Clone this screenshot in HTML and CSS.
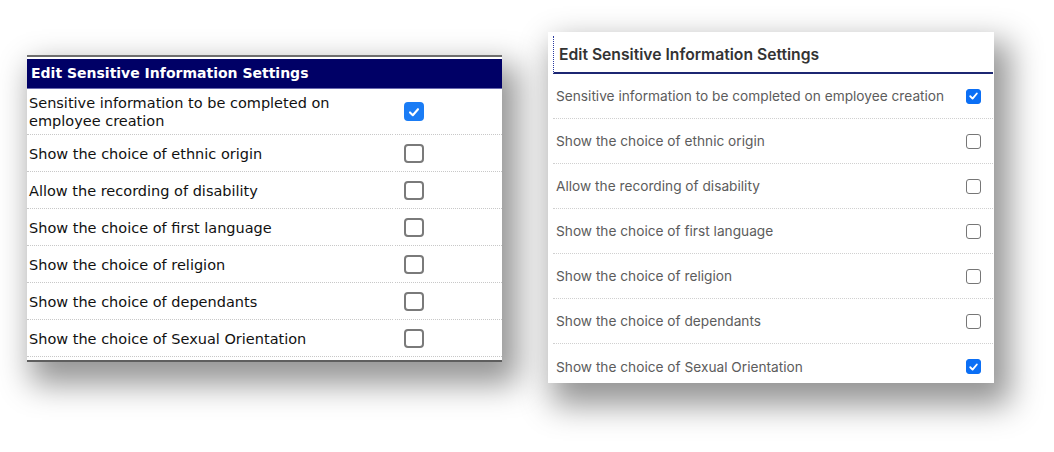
FILE: index.html
```html
<!DOCTYPE html>
<html>
<head>
<meta charset="utf-8">
<link rel="stylesheet" href="styles.css">
</head>
<body>
<div class="stage">
  <section class="old">
    <div class="old-head">Edit Sensitive Information Settings</div>
    <div class="old-grid">
      <div class="old-label tall">Sensitive information to be completed on employee creation</div>
      <div class="old-cell"><span class="cb-old on"><svg viewBox="0 0 20 20" width="20" height="20"><path d="M5 10.5 L8.5 14 L15 6.5" fill="none" stroke="#fff" stroke-width="2.6" stroke-linecap="round" stroke-linejoin="round"/></svg></span></div>
      <div class="old-label">Show the choice of ethnic origin</div>
      <div class="old-cell"><span class="cb-old"></span></div>
      <div class="old-label">Allow the recording of disability</div>
      <div class="old-cell"><span class="cb-old"></span></div>
      <div class="old-label">Show the choice of first language</div>
      <div class="old-cell"><span class="cb-old"></span></div>
      <div class="old-label">Show the choice of religion</div>
      <div class="old-cell"><span class="cb-old"></span></div>
      <div class="old-label">Show the choice of dependants</div>
      <div class="old-cell"><span class="cb-old"></span></div>
      <div class="old-label">Show the choice of Sexual Orientation</div>
      <div class="old-cell"><span class="cb-old"></span></div>
    </div>
  </section>

  <section class="new">
    <div class="new-head">Edit Sensitive Information Settings</div>
    <div class="new-row"><span>Sensitive information to be completed on employee creation</span><span class="cb-new on"><svg viewBox="0 0 14 14" width="14" height="14"><path d="M3.5 7.3 L6 9.8 L10.6 4.3" fill="none" stroke="#fff" stroke-width="2" stroke-linecap="round" stroke-linejoin="round"/></svg></span></div>
    <div class="new-row"><span>Show the choice of ethnic origin</span><span class="cb-new"></span></div>
    <div class="new-row"><span>Allow the recording of disability</span><span class="cb-new"></span></div>
    <div class="new-row"><span>Show the choice of first language</span><span class="cb-new"></span></div>
    <div class="new-row"><span>Show the choice of religion</span><span class="cb-new"></span></div>
    <div class="new-row"><span>Show the choice of dependants</span><span class="cb-new"></span></div>
    <div class="new-row last"><span>Show the choice of Sexual Orientation</span><span class="cb-new on"><svg viewBox="0 0 14 14" width="14" height="14"><path d="M3.5 7.3 L6 9.8 L10.6 4.3" fill="none" stroke="#fff" stroke-width="2" stroke-linecap="round" stroke-linejoin="round"/></svg></span></div>
  </section>
</div>
</body>
</html>
```

FILE: styles.css
```css
html, body {
  margin: 0;
  padding: 0;
  background: #ffffff;
}

.stage {
  display: flex;
  align-items: flex-start;
  padding-left: 27px;
  gap: 46px;
  width: 1054px;
  height: 452px;
  box-sizing: border-box;
  overflow: hidden;
}

/* ---------- old style panel ---------- */
.old {
  margin-top: 55px;
  width: 475px;
  background: #fff;
  border-top: 2px solid #6e6e6e;
  border-bottom: 2px solid #5e5e5e;
  padding: 2px 0 3px;
  box-shadow: 10px 16px 30px 6px rgba(0, 0, 0, 0.42);
  font-family: "DejaVu Sans", sans-serif;
  color: #111;
}

.old-head {
  background: #000066;
  color: #fff;
  font-weight: bold;
  font-size: 14px;
  height: 30px;
  line-height: 29px;
  padding-left: 4px;
  border-bottom: 1px solid #6a6ab0;
  box-sizing: border-box;
}

.old-grid {
  display: grid;
  grid-template-columns: 366px 107px;
  column-gap: 2px;
}

.old-label,
.old-cell {
  height: 37px;
  box-sizing: border-box;
  border-bottom: 1px dotted #c8c8c8;
  display: flex;
  align-items: center;
}

.old-label {
  padding-left: 2px;
  font-size: 14.5px;
  line-height: 18px;
  padding-top: 1px;
}

.old-label.tall,
.old-label.tall + .old-cell {
  height: 46px;
}

.old-cell {
  padding-left: 9px;
}

.cb-old {
  width: 20px;
  height: 19px;
  box-sizing: border-box;
  border: 2px solid #7a7a7a;
  border-radius: 4px;
  display: flex;
  align-items: center;
  justify-content: center;
}

.cb-old.on {
  background: #1a7cf5;
  border-color: #1a7cf5;
}

.cb-old svg {
  width: 18px;
  height: 18px;
}

/* ---------- new style panel ---------- */
.new {
  margin-top: 32px;
  width: 446px;
  height: 351px;
  overflow: hidden;
  background: #fff;
  padding: 4px 1px 0 5px;
  box-sizing: border-box;
  box-shadow: 10px 16px 30px 6px rgba(0, 0, 0, 0.42);
  font-family: Inter, "Noto Sans", sans-serif;
}

.new-head {
  height: 38px;
  box-sizing: border-box;
  border-left: 1px dotted #2a3aa0;
  border-bottom: 2px solid #1c2672;
  padding-left: 5px;
  padding-top: 1px;
  display: flex;
  align-items: center;
  font-size: 15.7px;
  font-weight: 600;
  color: #333;
}

.new-row {
  height: 45px;
  box-sizing: border-box;
  border-bottom: 1px dotted #d0d0d0;
  display: flex;
  align-items: center;
  justify-content: space-between;
  padding: 0 12px 0 3px;
  font-size: 13.7px;
  color: #5c5c5c;
}

.new-row.last {
  border-bottom: none;
}

.cb-new {
  width: 15px;
  height: 15px;
  box-sizing: border-box;
  border: 1.5px solid #767676;
  border-radius: 3px;
  display: flex;
  align-items: center;
  justify-content: center;
}

.cb-new.on {
  background: #0b6ff5;
  border-color: #0b6ff5;
}

.cb-new svg {
  width: 14px;
  height: 14px;
}
```
